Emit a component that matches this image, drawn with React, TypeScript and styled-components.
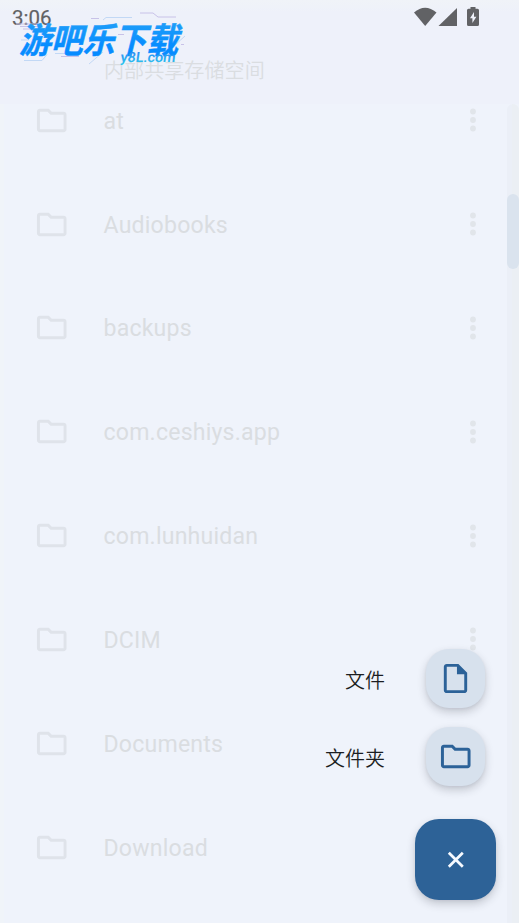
import React from 'react';
import styled, { createGlobalStyle } from 'styled-components';

const GlobalStyle = createGlobalStyle`
  * { box-sizing: border-box; }
  body { margin: 0; background: #eff3fb; }
`;

const sans = "Roboto, 'Noto Sans CJK SC', sans-serif";

const Screen = styled.main`
  position: relative;
  display: flex;
  flex-direction: column;
  width: 519px;
  height: 923px;
  overflow: hidden;
  background: #eff3fb;
  font-family: ${sans};
`;

const Header = styled.header`
  flex: none;
  height: 104px;
  background: linear-gradient(#f0f3f8 0, #eef1fa 12px);
`;

const StatusBar = styled.div`
  display: flex;
  justify-content: space-between;
  height: 34px;
  padding: 0 39px 0 12px;
  color: #616265;
`;

const Clock = styled.span`
  font-size: 20.5px;
  line-height: 36px;
  font-weight: 400;
  -webkit-text-stroke: 0.2px #616265;
`;

const StorageTitle = styled.h1`
  margin: 21px 0 0 104px;
  font-family: 'Noto Sans CJK SC', sans-serif;
  font-size: 20.1px;
  line-height: 30px;
  font-weight: 350;
  color: #dadde1;
`;

const Body = styled.div`
  display: flex;
  flex: 1;
  min-height: 0;
`;

const FileList = styled.ul`
  flex: 1;
  margin: 0;
  padding: 0;
  overflow: hidden;
  list-style: none;
  border-left: 4px solid #f0f4f9;
`;

const FileRow = styled.li`
  display: flex;
  align-items: center;
  height: 103.85px;
  padding: 0 29px 0 30px;
  color: #dfe3ea;
  &:first-child { margin-top: -35.7px; }
`;

const FileName = styled.span`
  flex: 1;
  padding: 3px 0 0 34px;
  font-size: 23.1px;
  line-height: 30px;
  letter-spacing: 0.2px;
  color: #dadde1;
`;

const Track = styled.div`
  width: 12px;
  padding-top: 90px;
  border-radius: 6px 6px 0 0;
  background: linear-gradient(90deg, #ebeff7 0 5px, #ebeff4 5px);
`;

const Thumb = styled.div`
  height: 75px;
  border-radius: 6px;
  background: #dae3ee;
`;

const SpeedDial = styled.div`
  position: absolute;
  right: 23px;
  bottom: 23px;
  display: flex;
  flex-direction: column;
  align-items: flex-end;
`;

const Action = styled.div`
  display: flex;
  align-items: center;
  gap: 41px;
  height: 59px;
  margin: 0 11px 19px 0;
`;

const ActionLabel = styled.span`
  padding-top: 2px;
  font-family: 'Noto Sans CJK SC', sans-serif;
  font-size: 20px;
  font-weight: 350;
  line-height: 30px;
  color: #1b1e22;
`;

const Fab = styled.button<{ $primary?: boolean }>`
  display: grid;
  place-items: center;
  width: ${p => (p.$primary ? 81 : 59)}px;
  height: ${p => (p.$primary ? 81 : 59)}px;
  margin-top: ${p => (p.$primary ? 14 : 0)}px;
  padding: 0;
  border: 0;
  border-radius: ${p => (p.$primary ? 24 : 23)}px;
  color: ${p => (p.$primary ? '#f7faff' : '#2c6298')};
  background: ${p => (p.$primary ? '#2d6297' : '#d7e1ed')};
  box-shadow: 0 4px 9px rgba(40, 45, 60, 0.22), 0 1px 3px rgba(40, 45, 60, 0.06);
`;

const Logo = styled.svg`
  position: absolute;
  left: 14px;
  top: 8px;
  overflow: visible;
`;

const FolderIcon = () => (
  <svg width="35.500" height="35" viewBox="0 0 24 24" preserveAspectRatio="none" fill="currentColor">
    <path d="M9.17 6l2 2H20v10H4V6h5.17M10 4H4c-1.1 0-2 .9-2 2v12c0 1.1.9 2 2 2h16c1.1 0 2-.9 2-2V8c0-1.1-.9-2-2-2h-8l-2-2z" />
  </svg>
);

const DocumentIcon = () => (
  <svg width="35" height="35" viewBox="0 0 24 24" fill="currentColor">
    <path d="M14 2H6c-1.1 0-2 .9-2 2v16c0 1.1.9 2 2 2h12c1.1 0 2-.9 2-2V8l-6-6zM6 20V4h7v5h5v11H6z" />
  </svg>
);

const MoreIcon = () => (
  <svg width="10" height="30" viewBox="0 0 10 30" fill="#e1e5ea">
    <circle cx="5" cy="6.5" r="2.9" />
    <circle cx="5" cy="15" r="2.9" />
    <circle cx="5" cy="23.5" r="2.9" />
  </svg>
);

const CloseIcon = () => (
  <svg width="18" height="18" viewBox="0 0 18 18" fill="none" stroke="currentColor" strokeWidth="2.7">
    <path d="M1.800 1.800l14 14M15.800 1.800l-14 14" />
  </svg>
);

const StatusIcons = () => (
  <svg width="66" height="28" viewBox="0 0 66 28" fill="#616265">
    <path d="M0 12.5Q11 3 22.5 12.5L11.2 26z" />
    <path d="M43 8v18H24.5z" />
    <path d="M56.5 7h5v1.7h2q1.5 0 1.5 1.5v14.3q0 1.5-1.5 1.5h-9q-1.5 0-1.5-1.5V10.200q0-1.500 1.500-1.500h2z" />
    <path d="M60 12l-4 6.200h2.400V23l4-6.300H60z" fill="#eef1fa" />
  </svg>
);

const BrandLogo = () => (
  <Logo width="200" height="66" viewBox="0 0 200 66">
    <defs>
      <linearGradient id="brandBlue" x1="0" y1="0" x2="0" y2="1">
        <stop offset="0" stopColor="#2aa6f6" />
        <stop offset="0.65" stopColor="#078dff" />
        <stop offset="1" stopColor="#078aff" />
      </linearGradient>
      <linearGradient id="domainBlue" x1="0" y1="0" x2="0" y2="1">
        <stop offset="0.2" stopColor="#2e8cf4" />
        <stop offset="1" stopColor="#2bc6ed" />
      </linearGradient>
    </defs>
    <g fill="none" strokeWidth="1">
      <path stroke="#c8c2e8" d="M2 16h22M6 18.500h20M9 21h14M77 10.500h8M126 5h13l5 4h18M47 48.500h18M104 26.500h6M167 36.500h3" />
      <path stroke="#c2d8f5" d="M89 12l3-2.500h26M10 52.500h18l5-6M41 45.500h10M75 56l14-12M151 46l20-18M7 32h8" />
    </g>
    <text
      transform="translate(5 44.500) skewX(-14)"
      fontFamily="'Noto Sans CJK SC', sans-serif"
      fontSize="35"
      fontWeight="700"
      textLength="159"
      lengthAdjust="spacingAndGlyphs"
      fill="url(#brandBlue)"
      stroke="url(#brandBlue)"
      strokeWidth="0.5"
    >
      游吧乐下载
    </text>
    <text
      transform="translate(106 53.500) skewX(-8)"
      fontFamily="Roboto, sans-serif"
      fontSize="14"
      fontWeight="600"
      textLength="55"
      lengthAdjust="spacingAndGlyphs"
      fill="url(#domainBlue)"
    >
      y8L.com
    </text>
  </Logo>
);

const files = ['at', 'Audiobooks', 'backups', 'com.ceshiys.app', 'com.lunhuidan', 'DCIM', 'Documents', 'Download'];

export default function App() {
  return (
    <Screen>
      <GlobalStyle />
      <Header>
        <StatusBar>
          <Clock>3:06</Clock>
          <StatusIcons />
        </StatusBar>
        <StorageTitle>内部共享存储空间</StorageTitle>
      </Header>
      <Body>
        <FileList>
          {files.map(name => (
            <FileRow key={name}>
              <FolderIcon />
              <FileName>{name}</FileName>
              <MoreIcon />
            </FileRow>
          ))}
        </FileList>
        <Track><Thumb /></Track>
      </Body>
      <BrandLogo />
      <SpeedDial>
        <Action>
          <ActionLabel>文件</ActionLabel>
          <Fab aria-label="文件"><DocumentIcon /></Fab>
        </Action>
        <Action>
          <ActionLabel>文件夹</ActionLabel>
          <Fab aria-label="文件夹"><FolderIcon /></Fab>
        </Action>
        <Fab $primary aria-label="关闭"><CloseIcon /></Fab>
      </SpeedDial>
    </Screen>
  );
}
